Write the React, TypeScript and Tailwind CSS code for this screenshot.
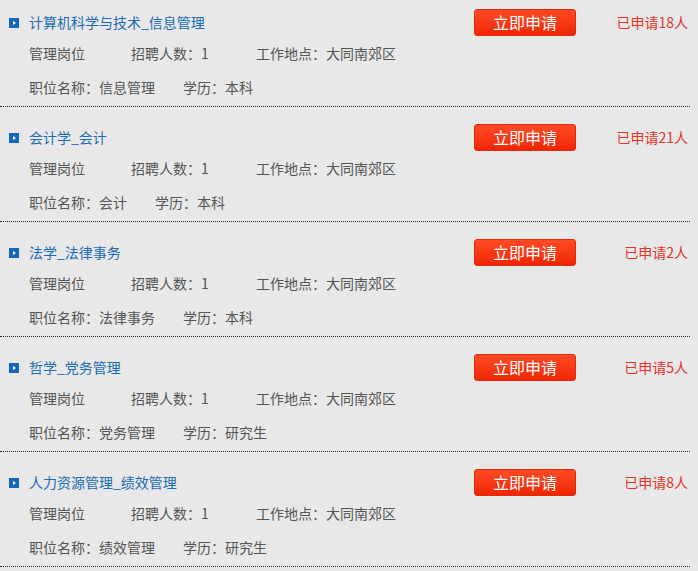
import React from "react";

type Job = {
  title: string;
  name: string;
  edu: string;
  count: number;
};

const jobs: Job[] = [
  { title: "计算机科学与技术_信息管理", name: "信息管理", edu: "本科", count: 18 },
  { title: "会计学_会计", name: "会计", edu: "本科", count: 21 },
  { title: "法学_法律事务", name: "法律事务", edu: "本科", count: 2 },
  { title: "哲学_党务管理", name: "党务管理", edu: "研究生", count: 5 },
  { title: "人力资源管理_绩效管理", name: "绩效管理", edu: "研究生", count: 8 },
];

function Bullet() {
  return (
    <svg width="10" height="10" viewBox="0 0 10 10" className="shrink-0">
      <rect x="0" y="0" width="10" height="10" fill="#1468b8" />
      <path d="M4 3 L7 5 L4 7 Z" fill="#ffffff" />
    </svg>
  );
}

export default function App() {
  return (
    <div
      className="w-[698px] h-[571px] overflow-hidden bg-[#e8e8e8] text-[14px] text-[#555555]"
      style={{ fontFamily: '"Microsoft YaHei", "Noto Sans CJK SC", "Noto Sans", sans-serif' }}
    >
      <div className="w-[690px] -mt-[8px]">
        {jobs.map((j) => (
          <div key={j.title} className="pt-[17px] pb-[7px] border-b border-dotted border-[#222222]">
            <div className="h-[27px] flex items-center">
              <div className="w-[29px] pl-[9px] flex items-center">
                <Bullet />
              </div>
              <div className="flex-1 text-[#1b6bb5] leading-[27px] whitespace-nowrap">{j.title}</div>
              <button className="w-[102px] h-[27px] rounded-[3px] border border-[#e02a08] bg-gradient-to-b from-[#ff4a24] to-[#f02400] text-white text-[16px] leading-[25px]">
                立即申请
              </button>
              <div className="w-[114px] pr-[2px] text-right text-[#e2332a] whitespace-nowrap">
                已申请{j.count}人
              </div>
            </div>
            <div className="mt-[5px] h-[24px] flex items-center pl-[29px] whitespace-nowrap">
              <span className="w-[102px]">管理岗位</span>
              <span className="w-[125px]">招聘人数：1</span>
              <span>工作地点：大同南郊区</span>
            </div>
            <div className="mt-[10px] h-[24px] flex items-center pl-[29px] whitespace-nowrap">
              <span className="mr-[28px]">职位名称：{j.name}</span>
              <span>学历：{j.edu}</span>
            </div>
          </div>
        ))}
      </div>
    </div>
  );
}
